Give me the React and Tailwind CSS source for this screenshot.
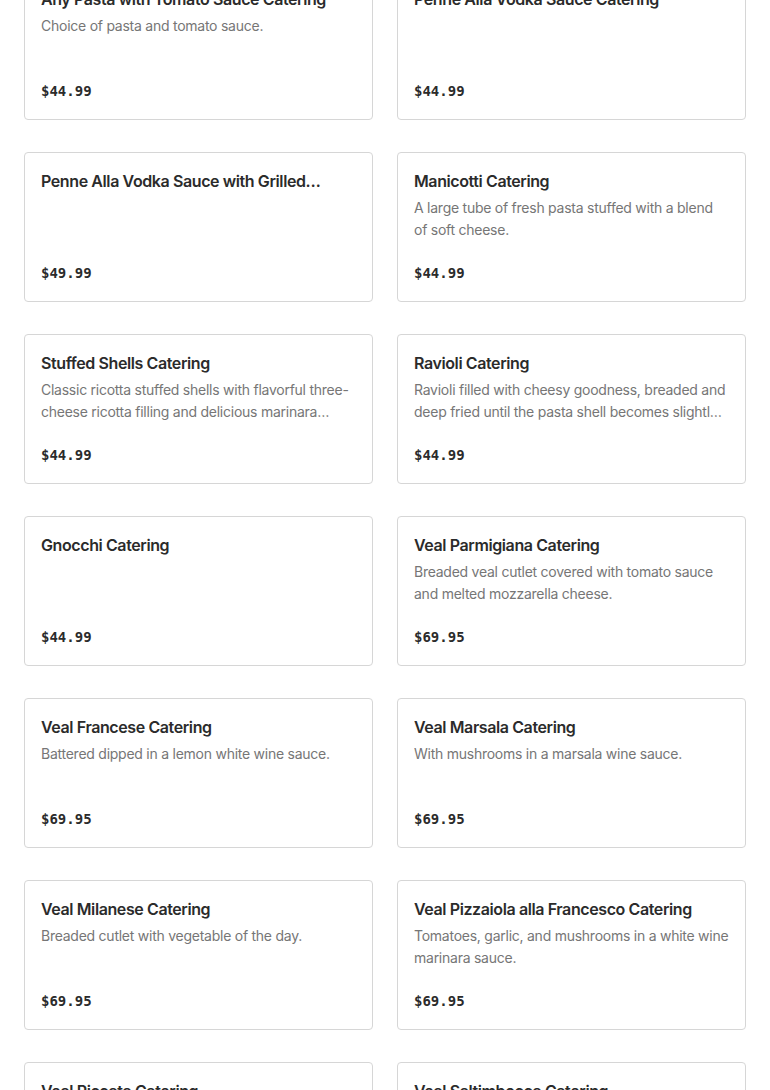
const items = [
  ["Any Pasta with Tomato Sauce Catering", "Choice of pasta and tomato sauce.", "$44.99"],
  ["Penne Alla Vodka Sauce Catering", "", "$44.99"],
  ["Penne Alla Vodka Sauce with Grilled Chicken Catering", "", "$49.99"],
  ["Manicotti Catering", "A large tube of fresh pasta stuffed with a blend of soft cheese.", "$44.99"],
  ["Stuffed Shells Catering", "Classic ricotta stuffed shells with flavorful three-cheese ricotta filling and delicious marinara sauce.", "$44.99"],
  ["Ravioli Catering", "Ravioli filled with cheesy goodness, breaded and deep fried until the pasta shell becomes slightly crispy.", "$44.99"],
  ["Gnocchi Catering", "", "$44.99"],
  ["Veal Parmigiana Catering", "Breaded veal cutlet covered with tomato sauce and melted mozzarella cheese.", "$69.95"],
  ["Veal Francese Catering", "Battered dipped in a lemon white wine sauce.", "$69.95"],
  ["Veal Marsala Catering", "With mushrooms in a marsala wine sauce.", "$69.95"],
  ["Veal Milanese Catering", "Breaded cutlet with vegetable of the day.", "$69.95"],
  ["Veal Pizzaiola alla Francesco Catering", "Tomatoes, garlic, and mushrooms in a white wine marinara sauce.", "$69.95"],
  ["Veal Piccata Catering", "Thin veal cutlets in a lemon butter caper sauce.", "$69.95"],
  ["Veal Saltimbocca Catering", "Veal topped with prosciutto and sage in a white wine sauce.", "$69.95"],
];

function Card({ title, desc, price }) {
  return (
    <div className="flex h-[150px] flex-col rounded-[4px] border border-[#d6d6d6] bg-white p-4">
      <div className="line-clamp-1 break-words text-[16px] font-semibold leading-6 tracking-[-0.4px] text-[#2b2b2b] [font-family:Inter,'Liberation_Sans',sans-serif]">
        {title}
      </div>
      <div className="mt-1 h-[44px] line-clamp-2 text-[14px] leading-[22px] tracking-[-0.25px] text-[#767676] [font-family:Inter,'Liberation_Sans',sans-serif]">
        {desc}
      </div>
      <div className="mt-auto pt-0.5 text-[14px] font-bold leading-6 text-[#2b2b2b] [font-family:'DejaVu_Sans_Mono',monospace]">
        {price}
      </div>
    </div>
  );
}

export default function App() {
  return (
    <div className="h-[1090px] overflow-hidden bg-white">
      <div className="-mt-[30px] grid grid-cols-2 gap-x-6 gap-y-8 px-6">
        {items.map(([t, d, p]) => (
          <Card key={t} title={t} desc={d} price={p} />
        ))}
      </div>
    </div>
  );
}
